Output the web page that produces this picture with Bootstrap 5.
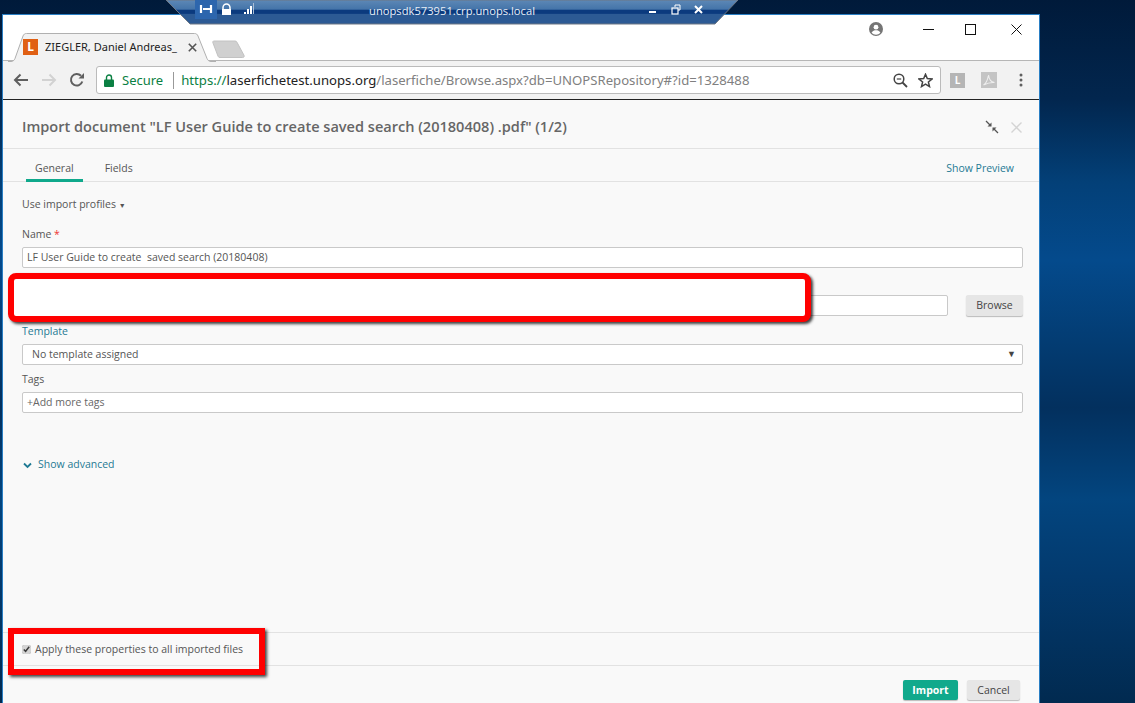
<!DOCTYPE html>
<html lang="en">
<head>
    <meta charset="UTF-8">
    <meta name="viewport" content="width=device-width, initial-scale=1.0">
    <title>Import document</title>
    <link href="https://cdn.jsdelivr.net/npm/bootstrap@5.3.0/dist/css/bootstrap.min.css" rel="stylesheet">
    <style>
        html, body { height: 100%; }
        body {
            margin: 0; overflow: hidden; position: relative;
            font-family: "Open Sans", "Liberation Sans", sans-serif;
            font-size: 10.5px; color: #555;
            background: linear-gradient(180deg, #001a3a 0%, #02264e 14%, #034078 26%, #044a8c 37%, #033d74 48%, #03305e 58%, #03457f 71%, #033a6e 82%, #012a50 100%);
        }
        /* browser window */
        .win { width: 1038px; height: 689px; margin: 14px 0 0 2px; background: #fff; border: 1px solid #2a7fc4; border-bottom: 0; }
        .win-top { height: 46px; position: relative; border-bottom: 1px solid #b6b6b6; }
        .win-ctl { height: 28px; padding-right: 17px; }
        .ctl-profile { margin-right: 40px; }
        .ctl-min { margin-right: 31px; }
        .ctl-max { margin-right: 35px; }
        .ctab { position: absolute; left: 5px; top: 18px; width: 208px; height: 29px; }
        .ctab-body { position: absolute; left: 5px; top: 18px; width: 208px; height: 29px; padding: 6px 0 0 15px; color: #222; font-size: 11px; line-height: 16px; font-family: "Noto Sans", "Open Sans", sans-serif; }
        .favi { width: 15px; height: 16px; background: #e06014; color: #fff; font-weight: 700; font-size: 12px; line-height: 16px; text-align: center; margin-right: 7px; }
        .ctab-title { width: 134px; white-space: nowrap; overflow: hidden; }
        .ctab-x { margin: 4px 0 0 9px; }
        .newtab { position: absolute; left: 208px; top: 25px; }
        .toolbar { height: 39px; background: #f2f2f2; padding: 0 0 0 10px; border-bottom: 1px solid #222; }
        .navbtns { gap: 12px; width: 83px; }
        .omni { width: 845px; height: 28px; background: #fff; border: 1px solid #bbb; border-radius: 3px; padding: 0 7px; font-size: 13.15px; font-family: "Noto Sans", "Open Sans", sans-serif; white-space: nowrap; }
        .sec { color: #0b8043; margin: 1px 10px 0 8px; font-size: 13px; }
        .omni-sep { width: 1px; height: 17px; background: #999; margin-right: 7px; }
        .omni-url { padding-top: 1px; }
        .u-scheme { color: #0b8043; }
        .u-host { color: #222; }
        .u-rest { color: #808080; }
        .star-ico { margin-left: 10px; }
        .ext-ico { width: 15px; height: 15px; background: #b5b5b5; color: #fff; font-size: 10px; font-weight: 700; line-height: 15px; text-align: center; }
        .ext-pdf { margin: 0 22px 0 16px; }
        .ext-row { flex-grow: 1; padding: 0 16px 0 9px; }
        /* import dialog */
        .dlg { flex-grow: 1; background: #f9f9f9; font-size: 10.5px; }
        .dlg-head { height: 49px; padding: 6px 17px 0 19px; border-bottom: 1px solid #e2e2e2; }
        .dlg-title { font-size: 14.55px; font-weight: 600; color: #666; margin: 0; }
        .dlg-tabs { height: 33px; padding: 0 25px 0 23px; border-bottom: 1px solid #e2e2e2; }
        .tab-item { height: 33px; line-height: 38px; padding: 0 9px; color: #555; margin-right: 13px; }
        .tab-item.on { border-bottom: 3px solid #10a98c; height: 33px; }
        .dlg-body { height: 450px; padding: 0 16px 0 19px; }
        .prof-row { height: 46px; padding-top: 15px; line-height: 14px; }
        .prof-row small { font-size: 7px; }
        .fld-lbl { display: block; margin: 0 0 6px; line-height: 13px; height: 13px; color: #555; }
        .teal-link, .fld-lbl.teal-link { color: #1f7a94; text-decoration: none; }
        .req { color: #e33; }
        .dlg .form-control, .dlg .form-select {
            height: 21px; min-height: 0; padding: 0 4px 2px; font-size: 10.5px; border-radius: 2px;
            border: 1px solid #c9c9c9; color: #555; background-color: #fff; box-shadow: none;
        }
        .dlg .form-select { padding: 0 0 0 9px; background-image: none; }
        .dlg .form-control::placeholder { color: #666; opacity: 1; }
        .sel-wrap { position: relative; }
        .sel-arrow { position: absolute; right: 7px; top: 3px; font-size: 9px; color: #444; pointer-events: none; }
        .fld { margin-bottom: 8px; }
        .fld-browse { margin-bottom: 9px; }
        .btn-browse { width: 57px; height: 21px; margin-left: 18px; padding: 0 0 2px; font-size: 10.5px; line-height: 18px; background: #e6e6e6; color: #444; border: 0; border-radius: 2px; box-shadow: 0 1px 1px #bbb; }
        .adv-row { margin-top: 45px; gap: 6px; height: 14px; }
        .dlg-apply { height: 34px; padding: 1px 0 0 19px; border-top: 1px solid #e2e2e2; border-bottom: 1px solid #e2e2e2; gap: 4px; color: #555; }
        .dlg-apply .form-check-input { appearance: auto; -webkit-appearance: auto; width: 9px; height: 9px; margin: 0; accent-color: #d4d4d4; }
        .dlg-foot { flex-grow: 1; padding: 14px 19px 0 0; gap: 9px; }
        .btn-imp, .btn-can { height: 20px; padding: 0; font-size: 10.5px; line-height: 20px; border: 0; border-radius: 2px; box-shadow: 0 1px 1px #bbb; }
        .btn-imp { width: 55px; background: #10a98c; color: #fff; font-weight: 700; }
        .btn-can { width: 53px; background: #e6e6e6; color: #444; }
        /* overlays: remote desktop bar and red annotation boxes */
        .rdp { position: absolute; left: 165px; top: 0; width: 574px; height: 25px; }
        .rdp-host { position: absolute; left: 0; right: 0; top: 2px; text-align: center; color: #e8eef6; font-size: 11.2px; line-height: 18px; }
        .mark-box { position: absolute; border: 6px solid #f00; background: transparent; box-shadow: 2px 2px 3px rgba(0,0,0,.75); }
        .mark-a { left: 8px; top: 273px; width: 803px; height: 49px; border-radius: 8px; background: #fff; }
        .mark-b { left: 8px; top: 628px; width: 257px; height: 47px; }
    </style>
</head>
<body>

    <div class="win d-flex flex-column">
        <div class="win-top">
            <div class="win-ctl d-flex justify-content-end align-items-center">
                <svg class="ctl-profile" width="14" height="14" viewBox="0 0 14 14"><circle cx="7" cy="7" r="7" fill="#757575"/><circle cx="7" cy="5.2" r="2.4" fill="#fff"/><path d="M2.600 10.800c1-2 2.800-2.600 4.400-2.600s3.400.6 4.400 2.600c-1.100 1.300-2.700 2-4.400 2s-3.300-.7-4.400-2z" fill="#fff"/></svg>
                <svg class="ctl-min" width="11" height="11" viewBox="0 0 11 11"><path d="M0 5.500h11" stroke="#111" stroke-width="1"/></svg>
                <svg class="ctl-max" width="11" height="11" viewBox="0 0 11 11"><rect x=".5" y=".5" width="10" height="10" fill="none" stroke="#111"/></svg>
                <svg width="11" height="11" viewBox="0 0 11 11"><path d="M.5.500l10 10M10.500.500l-10 10" stroke="#111" fill="none"/></svg>
            </div>
            <svg class="ctab" viewBox="0 0 208 29"><path d="M0 28.500h3c2 0 3-1 4-3L15 3c.7-1.700 1.700-2.500 3.500-2.500h168c1.800 0 2.800.8 3.500 2.500l9 22.500c1 2 2 3 4 3h5" fill="#f2f2f2" stroke="#b0b0b0"/></svg>
            <div class="ctab-body d-flex align-items-start">
                <div class="favi">L</div>
                <div class="ctab-title">ZIEGLER, Daniel Andreas_</div>
                <svg class="ctab-x" width="9" height="9" viewBox="0 0 9 9"><path d="M.8.800l7.400 7.400M8.200.800l-7.400 7.400" stroke="#555" stroke-width="1.600"/></svg>
            </div>
            <svg class="newtab" width="36" height="19" viewBox="0 0 36 19"><path d="M3 1h21c1 0 1.600.4 2 1.300l7 13c.6 1.200 0 2.200-1.400 2.200H9c-1 0-1.600-.4-2-1.300L2 3C1.500 1.800 1.800 1 3 1z" fill="#d0d0d0" stroke="#c2c2c2"/></svg>
        </div>
        <div class="toolbar d-flex align-items-center">
            <div class="navbtns d-flex align-items-center">
                <svg width="16" height="14" viewBox="0 0 16 14"><path d="M15 7H2M7.500 1.500 2 7l5.500 5.500" fill="none" stroke="#5f5f5f" stroke-width="2"/></svg>
                <svg width="16" height="14" viewBox="0 0 16 14"><path d="M1 7h13M8.500 1.500 14 7l-5.500 5.500" fill="none" stroke="#d2d2d2" stroke-width="2"/></svg>
                <svg width="16" height="16" viewBox="0 0 16 16"><path d="M13.300 9.500A5.800 5.800 0 1 1 12 3.800" fill="none" stroke="#5f5f5f" stroke-width="2"/><path d="M9.500 6.500h5.500V1z" fill="#5f5f5f"/></svg>
            </div>
            <div class="omni d-flex align-items-center">
                <svg width="10" height="13" viewBox="0 0 10 13"><path d="M2.500 6V3.500a2.500 2.500 0 0 1 5 0V6" fill="none" stroke="#0b8043" stroke-width="1.400"/><rect y="5.500" width="10" height="7.500" rx="1" fill="#0b8043"/></svg>
                <span class="sec">Secure</span>
                <span class="omni-sep"></span>
                <span class="omni-url"><span class="u-scheme">https://</span><span class="u-host">laserfichetest.unops.org</span><span class="u-rest">/laserfiche/Browse.aspx?db=UNOPSRepository#?id=1328488</span></span>
                <svg class="ms-auto" width="15" height="15" viewBox="0 0 15 15"><circle cx="6" cy="6" r="4.800" fill="none" stroke="#444" stroke-width="1.500"/><path d="M9.500 9.500 14 14" stroke="#444" stroke-width="1.800"/><path d="M3.800 6h4.400" stroke="#444" stroke-width="1.200"/></svg>
                <svg class="star-ico" width="15" height="15" viewBox="0 0 15 15"><path d="m7.500 1.300 1.800 4.300 4.700.4-3.600 3 1.100 4.600-4-2.400-4 2.400 1.100-4.600-3.600-3 4.700-.4z" fill="none" stroke="#444" stroke-width="1.500"/></svg>
            </div>
            <div class="ext-row d-flex align-items-center">
                <div class="ext-ico">L</div>
                <svg class="ext-pdf" width="16" height="16" viewBox="0 0 16 16"><rect width="16" height="16" fill="#c4c4c4"/><path d="M2.500 13c2-1 4-4.500 5-10 .5 4.500 2.500 7 6 7.500-3.500-.3-7 .5-11 2.500z" fill="none" stroke="#eee" stroke-width="1.100"/></svg>
                <svg width="4" height="14" viewBox="0 0 4 14"><circle cx="2" cy="2" r="1.500" fill="#5f5f5f"/><circle cx="2" cy="7" r="1.500" fill="#5f5f5f"/><circle cx="2" cy="12" r="1.500" fill="#5f5f5f"/></svg>
            </div>
        </div>

        <div class="dlg d-flex flex-column">
            <div class="dlg-head d-flex align-items-center justify-content-between">
                <h1 class="dlg-title">Import document "LF User Guide to create saved search (20180408) .pdf" (1/2)</h1>
                <div class="d-flex align-items-center gap-2">
                    <svg width="14" height="14" viewBox="0 0 14 14"><path d="M1 1l4 4M13 13 9 9" stroke="#555" stroke-width="1.300"/><path d="M6.500 6.500v-4l-4 4zM7.500 7.500v4l4-4z" fill="#555"/></svg>
                    <svg class="ms-1" width="11" height="11" viewBox="0 0 11 11"><path d="M.5.500l10 10M10.500.500l-10 10" stroke="#d4d4d4" stroke-width="1.400"/></svg>
                </div>
            </div>
            <div class="dlg-tabs d-flex">
                <div class="tab-item on">General</div>
                <div class="tab-item">Fields</div>
                <a class="teal-link ms-auto" href="#" style="line-height:38px">Show Preview</a>
            </div>
            <div class="dlg-body">
                <div class="prof-row">Use import profiles <small>▼</small></div>
                <div class="fld">
                    <label class="fld-lbl" for="doc-name">Name <span class="req">*</span></label>
                    <input id="doc-name" class="form-control" type="text" value="LF User Guide to create  saved search (20180408)">
                </div>
                <div class="fld-browse">
                    <div class="fld-lbl"></div>
                    <div class="d-flex">
                        <input class="form-control" type="text">
                        <button class="btn btn-browse flex-shrink-0" type="button">Browse</button>
                    </div>
                </div>
                <div class="fld">
                    <a class="fld-lbl teal-link" href="#">Template</a>
                    <div class="sel-wrap">
                        <select class="form-select"><option>No template assigned</option></select>
                        <span class="sel-arrow">▼</span>
                    </div>
                </div>
                <div>
                    <label class="fld-lbl" for="doc-tags">Tags</label>
                    <input id="doc-tags" class="form-control" type="text" placeholder="+Add more tags">
                </div>
                <div class="adv-row d-flex align-items-center">
                    <svg width="9" height="7" viewBox="0 0 9 7" style="margin-left:1px"><path d="M1 1.500 4.500 5 8 1.500" fill="none" stroke="#1f7a94" stroke-width="1.800"/></svg>
                    <a class="teal-link" href="#">Show advanced</a>
                </div>
            </div>
            <div class="dlg-apply d-flex align-items-center">
                <input class="form-check-input" type="checkbox" checked id="apply-all">
                <label for="apply-all">Apply these properties to all imported files</label>
            </div>
            <div class="dlg-foot d-flex justify-content-end align-items-start">
                <button class="btn btn-imp" type="button">Import</button>
                <button class="btn btn-can" type="button">Cancel</button>
            </div>
        </div>
    </div>

    <!-- remote desktop connection bar -->
    <div class="rdp">
        <svg class="position-absolute top-0 start-0" width="574" height="25" viewBox="0 0 574 25">
            <defs><linearGradient id="rdpFill" x1="0" y1="0" x2="0" y2="1"><stop offset="0" stop-color="#5d88b6"/><stop offset=".39" stop-color="#4474a9"/><stop offset=".41" stop-color="#0b3a7e"/><stop offset=".56" stop-color="#0b3a7e"/><stop offset=".58" stop-color="#2c5a94"/><stop offset="1" stop-color="#2c5a94"/></linearGradient></defs>
            <path d="M1 0 25 24H550L573 0z" fill="url(#rdpFill)" stroke="#6d7784"/>
            <rect x="30" y="0" width="22" height="19" fill="#2d66ad"/>
            <path d="M36 5v8M38 9h7M46 5v8" stroke="#fff" stroke-width="2.200" fill="none"/>
            <path d="M58 9V7.500a3.500 3.500 0 0 1 7 0V9" fill="none" stroke="#fff" stroke-width="1.500"/><rect x="57" y="9" width="9" height="6" fill="#fff"/>
            <path d="M79 12h2v2h-2zM82 9h2v5h-2zM85 6h2v8h-2z" fill="#fff"/><path d="M88 3h1v11h-1z" fill="#a9bdd5"/>
            <path d="M484 12h7" stroke="#fff" stroke-width="2"/>
            <rect x="507" y="8" width="6" height="6" fill="none" stroke="#fff" stroke-width="1.200"/><path d="M510 7V5h5v5h-2" fill="none" stroke="#fff"/>
            <path d="M530 6l7 7M537 6l-7 7" stroke="#fff" stroke-width="2"/>
        </svg>
        <div class="rdp-host">unopsdk573951.crp.unops.local</div>
    </div>

    <!-- red annotation boxes -->
    <div class="mark-box mark-a"></div>
    <div class="mark-box mark-b"></div>

</body>
</html>
